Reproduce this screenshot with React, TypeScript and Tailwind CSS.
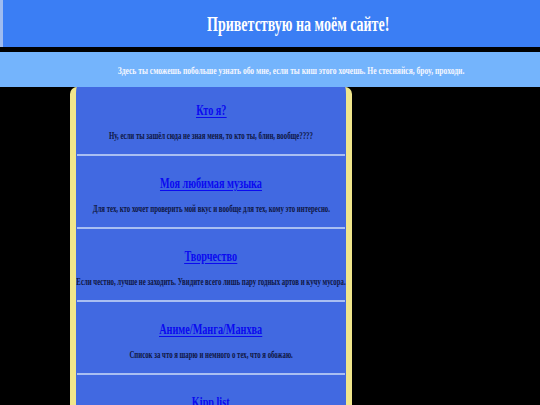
import React from "react";

function Sq({ children, className }: { children: React.ReactNode; className: string }) {
  return (
    <div className="flex justify-center w-full">
      <span className={"inline-block whitespace-nowrap " + className}>{children}</span>
    </div>
  );
}

const sections = [
  { t: "Кто я?", d: "Ну, если ты зашёл сюда не зная меня, то кто ты, блин, вообще????" },
  { t: "Моя любимая музыка", d: "Для тех, кто хочет проверить мой вкус и вообще для тех, кому это интересно." },
  { t: "Творчество", d: "Если честно, лучше не заходить. Увидите всего лишь пару годных артов и кучу мусора." },
  { t: "Аниме/Манга/Манхва", d: "Список за что я шарю и немного о тех, что я обожаю." },
  { t: "Kipp list", d: "Мои любимые персонажи и немного о них." },
];

export default function App() {
  return (
    <div className="min-h-screen bg-black font-['Liberation_Serif',serif] overflow-hidden">
      <header className="h-[47px] bg-[#3b7ef4] border-l-[3px] border-[#9fbcf0] flex items-center pl-[54px]">
        <Sq className="scale-x-[0.70] text-[20px] leading-[24px] font-bold text-white">Приветствую на моём сайте!</Sq>
      </header>
      <div className="h-[5px]" />
      <div className="h-[35px] bg-[#74b4fc] flex items-center pl-[42px]">
        <Sq className="scale-x-[0.69] text-[11px] leading-[14px] font-bold text-[#f4f7ff]">
          Здесь ты сможешь побольше узнать обо мне, если ты киш этого хочешь. Не стесняйся, броу, проходи.
        </Sq>
      </div>
      <main className="ml-[70px] w-[282px] bg-[#4169e1] border-x-[6px] border-[#f0e68c] rounded-t-[7px] pt-[14px]">
        {sections.map((s, i) => (
          <section key={i} className={i === 0 ? "" : "pt-[18px]"}>
            <Sq className="scale-x-[0.68] text-[15px] leading-[18px] font-bold text-[#0a0af0] underline underline-offset-2">
              <a href="#">{s.t}</a>
            </Sq>
            <div className="mt-[10px]">
              <Sq className="scale-x-[0.68] text-[10px] leading-[14px] font-bold text-[#0e1540]">{s.d}</Sq>
            </div>
            <div className="mt-[11px] mx-[1px] h-[2px] bg-[#a9bff2]" />
          </section>
        ))}
      </main>
    </div>
  );
}
